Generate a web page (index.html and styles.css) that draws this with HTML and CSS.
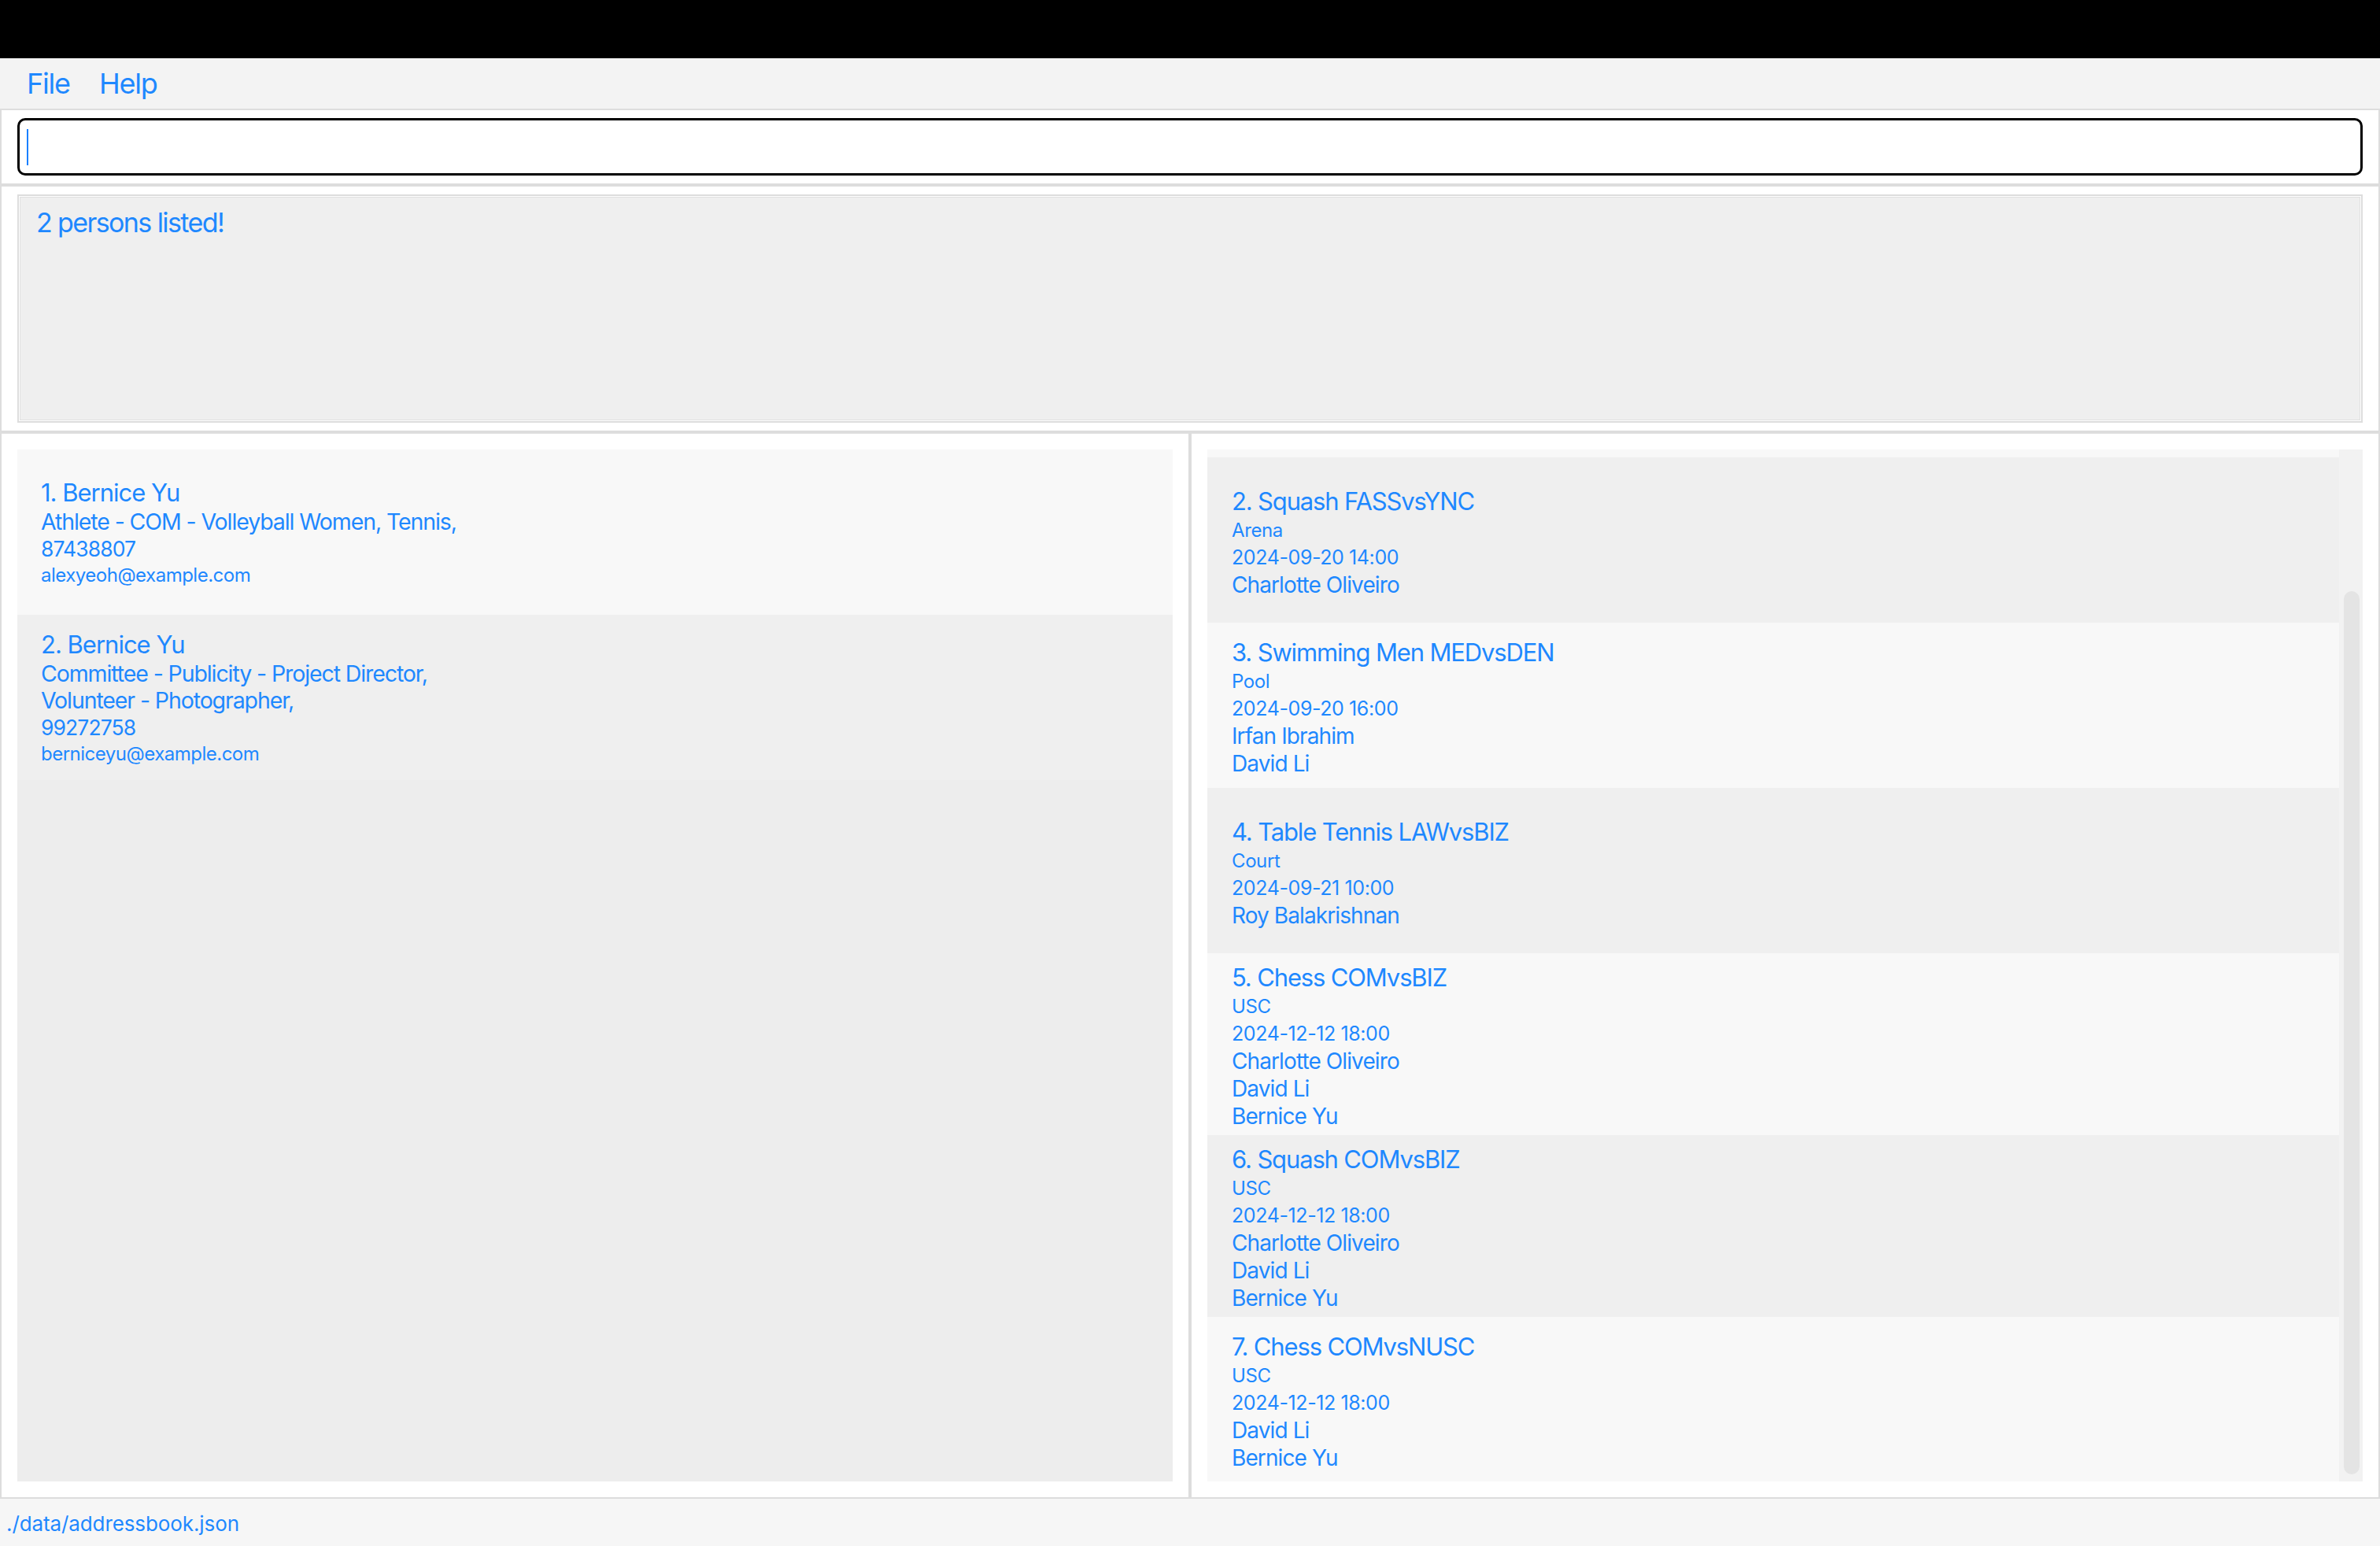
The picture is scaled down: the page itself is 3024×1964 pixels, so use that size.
FILE: index.html
```html
<!DOCTYPE html>
<html lang="en">
<head>
<meta charset="utf-8">
<title>Address Book</title>
<link rel="stylesheet" href="styles.css">
</head>
<body>
<div class="app">
  <div class="titlebar"></div>
  <nav class="menubar">
    <span class="menu-item">File</span>
    <span class="menu-item">Help</span>
  </nav>
  <section class="panel command-panel">
    <div class="command-box"><span class="caret"></span></div>
  </section>
  <section class="panel result-panel">
    <div class="result-display">2 persons listed!</div>
  </section>
  <main class="lists">
    <section class="panel list-panel">
      <div class="person-list">
        <div class="card person-card light">
          <div class="name">1. Bernice Yu</div>
          <div class="tags">Athlete - COM - Volleyball Women, Tennis,</div>
          <div class="phone">87438807</div>
          <div class="email">alexyeoh@example.com</div>
        </div>
        <div class="card person-card dark">
          <div class="name">2. Bernice Yu</div>
          <div class="tags">Committee - Publicity - Project Director,</div>
          <div class="tags">Volunteer - Photographer,</div>
          <div class="phone">99272758</div>
          <div class="email">berniceyu@example.com</div>
        </div>
      </div>
    </section>
    <section class="panel list-panel">
      <div class="event-list">
        <div class="event-scroll">
          <div class="card-clip"></div>
          <div class="card event-card dark">
            <div class="name">2. Squash FASSvsYNC</div>
            <div class="venue">Arena</div>
            <div class="date">2024-09-20 14:00</div>
            <div class="participant">Charlotte Oliveiro</div>
          </div>
          <div class="card event-card light">
            <div class="name">3. Swimming Men MEDvsDEN</div>
            <div class="venue">Pool</div>
            <div class="date">2024-09-20 16:00</div>
            <div class="participant">Irfan Ibrahim</div>
            <div class="participant">David Li</div>
          </div>
          <div class="card event-card dark">
            <div class="name">4. Table Tennis LAWvsBIZ</div>
            <div class="venue">Court</div>
            <div class="date">2024-09-21 10:00</div>
            <div class="participant">Roy Balakrishnan</div>
          </div>
          <div class="card event-card light">
            <div class="name">5. Chess COMvsBIZ</div>
            <div class="venue">USC</div>
            <div class="date">2024-12-12 18:00</div>
            <div class="participant">Charlotte Oliveiro</div>
            <div class="participant">David Li</div>
            <div class="participant">Bernice Yu</div>
          </div>
          <div class="card event-card dark">
            <div class="name">6. Squash COMvsBIZ</div>
            <div class="venue">USC</div>
            <div class="date">2024-12-12 18:00</div>
            <div class="participant">Charlotte Oliveiro</div>
            <div class="participant">David Li</div>
            <div class="participant">Bernice Yu</div>
          </div>
          <div class="card event-card light">
            <div class="name">7. Chess COMvsNUSC</div>
            <div class="venue">USC</div>
            <div class="date">2024-12-12 18:00</div>
            <div class="participant">David Li</div>
            <div class="participant">Bernice Yu</div>
          </div>
        </div>
        <div class="scrollbar"><div class="thumb"></div></div>
      </div>
    </section>
  </main>
  <footer class="statusbar">./data/addressbook.json</footer>
</div>
</body>
</html>
```
FILE: styles.css
```css
* { box-sizing: border-box; }

html, body {
  margin: 0;
  padding: 0;
  background: #ffffff;
}

body {
  font-family: "Inter", "Noto Sans", sans-serif;
  color: #1e88ff;
}

.app {
  display: flex;
  flex-direction: column;
  height: 100vh;
  overflow: hidden;
}

.titlebar {
  height: 74px;
  flex: none;
  background: #000000;
}

.menubar {
  flex: none;
  height: 64px;
  background: #f3f3f3;
  display: flex;
  gap: 37px;
  padding-left: 34px;
  font-size: 36px;
  line-height: 64px;
  letter-spacing: -1.2px;
}

.panel {
  border: 2px solid #dddddd;
  background: #ffffff;
}

.command-panel {
  flex: none;
  padding: 10px 20px;
}

.command-box {
  height: 73px;
  border: 3px solid #000000;
  border-radius: 10px;
  background: #ffffff;
  padding: 11px 9px;
}

.caret {
  display: block;
  width: 2px;
  height: 46px;
  background: #1a80ff;
}

.result-panel {
  flex: none;
  padding: 10px 20px;
}

.result-display {
  height: 290px;
  background: #efefef;
  border: 2px solid #dddddd;
  box-shadow: inset 0 0 0 1px #ffffff, inset 0 0 0 2px #e0e0e0;
  padding: 13px 22px;
  font-size: 34px;
  letter-spacing: -1.6px;
}

.lists {
  flex: 1;
  min-height: 0;
  display: grid;
  grid-template-columns: 1fr 1fr;
}

.list-panel {
  padding: 20px;
  min-height: 0;
  display: flex;
}

.person-list {
  flex: 1;
  background: #ededed;
  overflow: hidden;
}

.card {
  display: flex;
  flex-direction: column;
  justify-content: center;
  min-height: 210px;
}

.light { background: #f8f8f8; }
.dark { background: #efefef; }

.person-card {
  padding: 17px 30px 16px;
}

.name {
  font-size: 31px;
  line-height: 40px;
  letter-spacing: -1px;
}

.person-card .tags {
  font-size: 28.5px;
  line-height: 34px;
  letter-spacing: -1.1px;
}

.person-card .phone {
  font-size: 26.5px;
  line-height: 34px;
  letter-spacing: -0.9px;
}

.person-card .email {
  font-size: 24px;
  line-height: 33px;
  letter-spacing: -0.5px;
}

.event-list {
  flex: 1;
  display: flex;
  overflow: hidden;
}

.event-scroll {
  flex: 1;
  overflow: hidden;
}

.card-clip {
  height: 10px;
  background: #f8f8f8;
}

.event-card {
  padding: 12px 31px 6px;
}

.event-card .name {
  line-height: 38px;
  letter-spacing: -1.15px;
}

.event-card .venue {
  font-size: 24px;
  line-height: 35px;
  letter-spacing: -0.4px;
}

.event-card .date {
  font-size: 25px;
  line-height: 35px;
  letter-spacing: -0.4px;
}

.event-card .participant {
  font-size: 28px;
  line-height: 35px;
  letter-spacing: -0.9px;
}

.scrollbar {
  width: 30px;
  flex: none;
  background: #f2f2f2;
  display: flex;
  flex-direction: column;
  padding: 180px 4px 9px 6px;
}

.thumb {
  flex: 1;
  background: #e4e4e4;
  border-radius: 10px;
}

.statusbar {
  flex: none;
  height: 60px;
  background: #f6f6f6;
  padding: 16px 8px 0;
  font-size: 26px;
  line-height: 1.211;
  letter-spacing: -0.1px;
}
```
